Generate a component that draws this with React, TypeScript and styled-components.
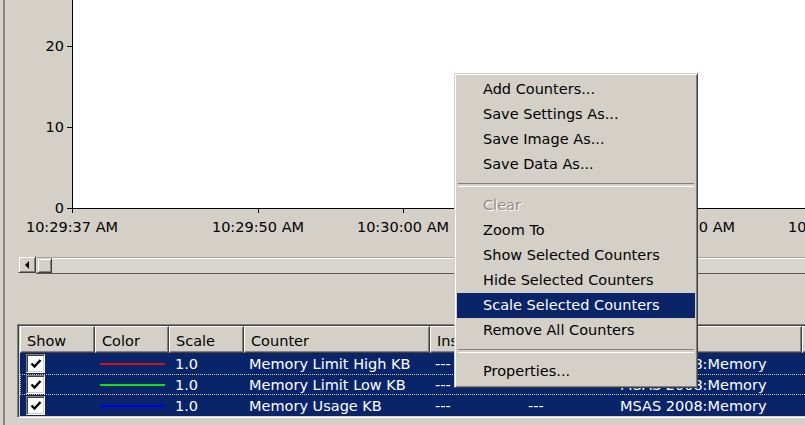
import React from 'react';
import styled, { createGlobalStyle } from 'styled-components';

const FONT = `"DejaVu Sans", Verdana, sans-serif`;

const Global = createGlobalStyle`
  html, body { margin: 0; padding: 0; }
  body { background: #d4d0c8; font-family: ${FONT}; }
  * { box-sizing: border-box; }
`;

const Screen = styled.div`
  position: relative;
  width: 805px;
  height: 425px;
  overflow: hidden;
  background: #d4d0c8;
  padding-left: 3px;
  font-family: ${FONT};
  font-size: 14.5px;
  color: #000;
`;

const Frame = styled.div`
  height: 100%;
  border-left: 2px solid #8a8782;
  display: flex;
  flex-direction: column;
`;

/* ---------- chart ---------- */
const ChartRow = styled.div`
  display: flex;
  height: 209px;
`;

const YAxis = styled.div`
  position: relative;
  width: 67px;
  flex: none;
`;

const YLabel = styled.span`
  position: absolute;
  right: 8px;
  line-height: 18px;
  transform: translateY(-50%);
  white-space: nowrap;
`;

const YTick = styled.span`
  position: absolute;
  right: 0;
  width: 5px;
  height: 1px;
  background: #000;
`;

const Plot = styled.div`
  flex: 1;
  background: #fff;
  border-left: 1px solid #000;
  border-bottom: 1px solid #000;
`;

const XAxis = styled.div`
  position: relative;
  height: 36px;
  flex: none;
`;

const XLabel = styled.span`
  position: absolute;
  top: 9px;
  line-height: 18px;
  transform: translateX(-50%);
  white-space: nowrap;
`;

const XTick = styled.span`
  position: absolute;
  top: 0;
  width: 1px;
  height: 4px;
  background: #000;
`;

/* ---------- scrollbar ---------- */
const ScrollBar = styled.div`
  display: flex;
  height: 17px;
  margin: 12px 0 0 13px;
  flex: none;
`;

const Track = styled.div`
  flex: 1;
  display: flex;
  border-top: 1px solid #a8a5a0;
  border-bottom: 1px solid #5a5854;
  box-shadow: inset 0 1px 0 #fff;
  background: #d8d5cf;
`;

const Raised = styled.div<{ $w: number }>`
  width: ${p => p.$w}px;
  height: 100%;
  flex: none;
  background: #d4d0c8;
  border-top: 1px solid #d4d0c8;
  border-left: 1px solid #d4d0c8;
  border-right: 1px solid #404040;
  border-bottom: 1px solid #404040;
  box-shadow: inset 1px 1px 0 #fff, inset -1px -1px 0 #808080;
  display: flex;
  align-items: center;
  justify-content: center;
`;

const ArrowBtn = styled(Raised)`
  margin-top: -1px;
  height: 17px;
`;

const Thumb = styled(Raised)`
  margin-left: 1px;
`;

/* ---------- table ---------- */
const COLS = '75px 74px 75px 186px 92px 93px 187px 150px';

const Table = styled.div`
  margin: 50px 0 0 12px;
  width: 900px;
  border-top: 1px solid #808080;
  border-left: 1px solid #808080;
  border-bottom: 1px solid #fff;
  box-shadow: inset 1px 1px 0 #404040, inset 0 -1px 0 #d4d0c8;
  padding: 1px 0 1px 2px;
  flex: none;
`;

const HeaderRow = styled.div`
  display: grid;
  grid-template-columns: ${COLS};
  height: 27px;
`;

const HeaderCell = styled.div`
  background: #d4d0c8;
  border-top: 1px solid #fff;
  border-left: 1px solid #fff;
  border-right: 1px solid #404040;
  border-bottom: 1px solid #404040;
  box-shadow: inset -1px -1px 0 #808080;
  padding: 2px 0 0 6px;
  line-height: 24px;
  white-space: nowrap;
  overflow: hidden;
`;

const Row = styled.div<{ $focus?: boolean }>`
  display: grid;
  grid-template-columns: ${COLS};
  height: 21px;
  background: #0a246a;
  color: #fff;
  outline: ${p => (p.$focus ? '1px dotted #d8cc90' : 'none')};
  outline-offset: -1px;
`;

const Cell = styled.div<{ $pad?: number }>`
  padding-left: ${p => p.$pad ?? 5}px;
  white-space: nowrap;
  display: flex;
  align-items: center;
`;

const TextCell = styled(Cell)`
  padding-top: 2px;
  line-height: 19px;
`;

const CheckBox = styled.div`
  width: 19px;
  height: 19px;
  margin-left: 6px;
  background: #fff;
  border-top: 1px solid #808080;
  border-left: 1px solid #808080;
  border-right: 1px solid #fff;
  border-bottom: 1px solid #fff;
  box-shadow: inset 1px 1px 0 #404040, inset -1px -1px 0 #d4d0c8;
  display: flex;
  align-items: center;
  justify-content: center;
`;

const Swatch = styled.div<{ $c: string }>`
  width: 65px;
  height: 2px;
  margin-top: 1px;
  background: ${p => p.$c};
`;

/* ---------- context menu ---------- */
const Menu = styled.div`
  position: absolute;
  left: 454px;
  top: 73px;
  width: 244px;
  background: #d4d0c8;
  border-top: 1px solid #d4d0c8;
  border-left: 1px solid #d4d0c8;
  border-right: 1px solid #404040;
  border-bottom: 1px solid #404040;
  box-shadow: inset 1px 1px 0 #fff, inset -1px -1px 0 #808080;
  padding: 3px 2px;
`;

const MenuItem = styled.div<{ $active?: boolean; $disabled?: boolean }>`
  height: 25px;
  line-height: 25px;
  padding-left: 26px;
  white-space: nowrap;
  background: ${p => (p.$active ? '#0a246a' : 'transparent')};
  color: ${p => (p.$active ? '#fff' : p.$disabled ? '#8f8d89' : '#000')};
  text-shadow: ${p => (p.$disabled ? '1px 1px 0 #fff' : 'none')};
`;

const Separator = styled.div`
  height: 16px;
  display: flex;
  align-items: center;
  padding: 0 1px;
  &::after {
    content: '';
    flex: 1;
    height: 2px;
    border-top: 1px solid #808080;
    border-bottom: 1px solid #fff;
  }
`;

const yTicks = [
  { v: '20', y: 46 },
  { v: '10', y: 127 },
  { v: '0', y: 208 },
];

const xTicks = [
  { t: '10:29:37 AM', x: 67 },
  { t: '10:29:50 AM', x: 253 },
  { t: '10:30:00 AM', x: 398 },
  { t: '10:30:05 AM', x: 543 },
  { t: '10:30:10 AM', x: 684 },
  { t: '10:30:20 AM', x: 829 },
];

const counters = [
  { color: '#d0101a', name: 'Memory Limit High KB' },
  { color: '#10e010', name: 'Memory Limit Low KB', focus: true },
  { color: '#0000f0', name: 'Memory Usage KB' },
];

const menuItems: Array<{ label?: string; sep?: boolean; active?: boolean; disabled?: boolean }> = [
  { label: 'Add Counters...' },
  { label: 'Save Settings As...' },
  { label: 'Save Image As...' },
  { label: 'Save Data As...' },
  { sep: true },
  { label: 'Clear', disabled: true },
  { label: 'Zoom To' },
  { label: 'Show Selected Counters' },
  { label: 'Hide Selected Counters' },
  { label: 'Scale Selected Counters', active: true },
  { label: 'Remove All Counters' },
  { sep: true },
  { label: 'Properties...' },
];

const Check = () => (
  <svg width="12" height="11" viewBox="0 0 12 11">
    <polyline points="1.5,5.5 4.5,8.5 10.5,2" fill="none" stroke="#000" strokeWidth="2.4" />
  </svg>
);

const LeftArrow = () => (
  <svg width="5" height="8" viewBox="0 0 5 8">
    <polygon points="4,0 4,8 0,4" fill="#000" />
  </svg>
);

export default function App() {
  return (
    <>
      <Global />
      <Screen>
        <Frame>
          <ChartRow>
            <YAxis>
              {yTicks.map(t => (
                <React.Fragment key={t.v}>
                  <YLabel style={{ top: t.y }}>{t.v}</YLabel>
                  <YTick style={{ top: t.y }} />
                </React.Fragment>
              ))}
            </YAxis>
            <Plot />
          </ChartRow>
          <XAxis>
            {xTicks.map(t => (
              <React.Fragment key={t.t}>
                <XTick style={{ left: t.x }} />
                <XLabel style={{ left: t.x }}>{t.t}</XLabel>
              </React.Fragment>
            ))}
          </XAxis>
          <ScrollBar>
            <ArrowBtn $w={18}>
              <LeftArrow />
            </ArrowBtn>
            <Track>
              <Thumb $w={15} />
            </Track>
          </ScrollBar>
          <Table>
            <HeaderRow>
              <HeaderCell>Show</HeaderCell>
              <HeaderCell>Color</HeaderCell>
              <HeaderCell>Scale</HeaderCell>
              <HeaderCell>Counter</HeaderCell>
              <HeaderCell>Instance</HeaderCell>
              <HeaderCell>Parent</HeaderCell>
              <HeaderCell>Object</HeaderCell>
              <HeaderCell>Computer</HeaderCell>
            </HeaderRow>
            {counters.map(c => (
              <Row key={c.name} $focus={c.focus}>
                <Cell $pad={0}>
                  <CheckBox>
                    <Check />
                  </CheckBox>
                </Cell>
                <Cell>
                  <Swatch $c={c.color} />
                </Cell>
                <TextCell $pad={6}>1.0</TextCell>
                <TextCell>{c.name}</TextCell>
                <TextCell>---</TextCell>
                <TextCell $pad={6}>---</TextCell>
                <TextCell>MSAS 2008:Memory</TextCell>
                <TextCell>\\SERVER</TextCell>
              </Row>
            ))}
          </Table>
        </Frame>
        <Menu>
          {menuItems.map((m, i) =>
            m.sep ? (
              <Separator key={i} />
            ) : (
              <MenuItem key={i} $active={m.active} $disabled={m.disabled}>
                {m.label}
              </MenuItem>
            )
          )}
        </Menu>
      </Screen>
    </>
  );
}
